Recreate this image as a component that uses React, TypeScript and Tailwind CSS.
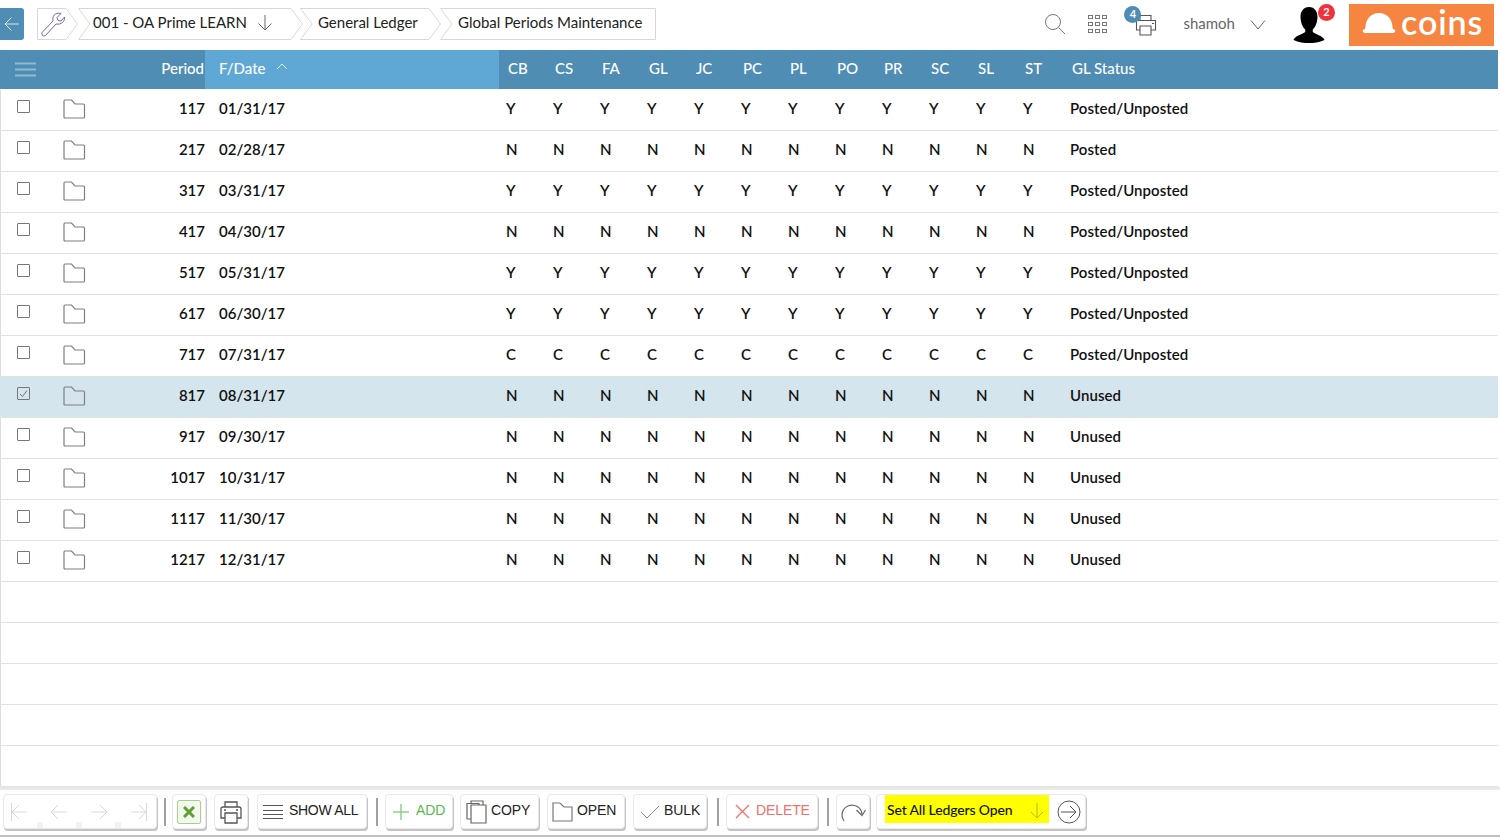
import React from "react";

const font = { fontFamily: "Lato, 'Open Sans', sans-serif" };

const data: [string, string, string, string][] = [
  ["117", "01/31/17", "Y", "Posted/Unposted"],
  ["217", "02/28/17", "N", "Posted"],
  ["317", "03/31/17", "Y", "Posted/Unposted"],
  ["417", "04/30/17", "N", "Posted/Unposted"],
  ["517", "05/31/17", "Y", "Posted/Unposted"],
  ["617", "06/30/17", "Y", "Posted/Unposted"],
  ["717", "07/31/17", "C", "Posted/Unposted"],
  ["817", "08/31/17", "N", "Unused"],
  ["917", "09/30/17", "N", "Unused"],
  ["1017", "10/31/17", "N", "Unused"],
  ["1117", "11/30/17", "N", "Unused"],
  ["1217", "12/31/17", "N", "Unused"],
];
const cols = ["CB", "CS", "FA", "GL", "JC", "PC", "PL", "PO", "PR", "SC", "SL", "ST"];
const grid = "grid grid-cols-[205px_294px_repeat(12,47px)_1fr] items-center";

function Crumb({ w, first, last, children }: { w: number; first?: boolean; last?: boolean; children: React.ReactNode }) {
  const h = 32;
  const tip = 12;
  const d = last
    ? `M0.5 0.5 L${tip} ${h / 2} L0.5 ${h - 0.5} L${w - 0.5} ${h - 0.5} L${w - 0.5} 0.5 Z`
    : first
    ? `M0.5 0.5 L${w - tip} 0.5 L${w - 0.5} ${h / 2} L${w - tip} ${h - 0.5} L0.5 ${h - 0.5} Z`
    : `M0.5 0.5 L${tip} ${h / 2} L0.5 ${h - 0.5} L${w - tip} ${h - 0.5} L${w - 0.5} ${h / 2} L${w - tip} 0.5 Z`;
  return (
    <div className="relative h-[32px] flex items-center shrink-0 text-[15px] text-[#222]" style={{ width: w }}>
      <svg className="absolute left-0 top-0" width={w} height={h} fill="none">
        <path d={d} stroke="#d8d8d8" />
      </svg>
      <div className="relative flex items-center -mt-[2px]">{children}</div>
    </div>
  );
}

function Folder() {
  return (
    <svg className="block" width="23" height="20" viewBox="0 0 23 20" fill="none" stroke="#7f7f7f" strokeWidth="1.2">
      <path d="M1 2.2 Q1 1 2 1 L8.5 1 L12 5 L20.5 5 Q21.5 5 21.5 6 L21.5 18 Q21.5 19 20.5 19 L2 19 Q1 19 1 18 Z" />
    </svg>
  );
}

function Btn({ className, children }: { className: string; children: React.ReactNode }) {
  return (
    <div className={`h-[35px] shrink-0 flex items-center bg-white rounded-[4px] border border-[#e8e8e8] shadow-[1px_2px_0_#c4c4c4] ${className}`}>
      {children}
    </div>
  );
}

function Sep({ className }: { className: string }) {
  return <div className={`w-[2px] h-[28px] bg-[#a0a0a0] shrink-0 ${className}`} />;
}

export default function App() {
  return (
    <div className="w-[1500px] h-[838px] overflow-hidden bg-white flex flex-col" style={font}>
      {/* top bar */}
      <div className="h-[50px] shrink-0 flex items-center relative">
        <div className="w-[24px] h-[32px] bg-[#4f8db5] rounded-r-[3px] flex items-center justify-center -mt-[3px]">
          <svg width="16" height="16" viewBox="0 0 16 16" fill="none" stroke="#dbe9f2" strokeWidth="1">
            <path d="M15 8 L1 8 M7.5 1.5 L1 8 L7.5 14.5" />
          </svg>
        </div>
        <div className="flex items-center ml-[13px] -mt-[3px]">
          <Crumb w={41} first>
            <svg className="ml-[3px] mt-[2px]" width="26" height="26" viewBox="0 0 26 26" fill="none" stroke="#7d64b5" strokeWidth="1">
              <path d="M2 21.5 L13 10 Q12 5 15.500 3 Q18 1.500 21 2.500 L17 6.500 L18 9.500 L21 10 L24.500 6 Q25 9.500 22.500 11.500 Q19.500 14 16 13 L5.500 24.500 Q3.500 25.500 2.500 24.500 Q1.500 23 2 21.500 Z" />
            </svg>
          </Crumb>
          <Crumb w={225}>
            <span className="ml-[15px]">001 - OA Prime LEARN</span>
            <svg className="ml-[10px] mt-[1px]" width="16" height="18" viewBox="0 0 16 18" fill="none" stroke="#666" strokeWidth="1">
              <path d="M8 1 L8 16 M1.500 9.500 L8 16 L14.500 9.500" />
            </svg>
          </Crumb>
          <div className="-ml-[3px]">
            <Crumb w={141}>
              <span className="ml-[18px]">General Ledger</span>
            </Crumb>
          </div>
          <div className="-ml-[1px]">
            <Crumb w={216} last>
              <span className="ml-[18px]">Global Periods Maintenance</span>
            </Crumb>
          </div>
        </div>
        <div className="ml-auto flex items-center h-full relative">
          <svg className="-mt-[3px]" width="22" height="22" viewBox="0 0 22 22" fill="none" stroke="#777" strokeWidth="1">
            <circle cx="9" cy="9" r="7.500" />
            <path d="M14.500 14.500 L21 21" />
          </svg>
          <svg className="ml-[22px] -mt-[2px]" width="19" height="19" viewBox="0 0 19 19" fill="#777">
            {[0, 7, 14].flatMap((y) =>
              [0, 7, 14].map((x) => (
                <path key={`${x}-${y}`} fillRule="evenodd" d={`M${x} ${y}h5v4h-5z M${x + 1} ${y + 1}v2h3v-2z`} />
              ))
            )}
          </svg>
          <div className="relative ml-[28px] -mt-[1px]">
            <svg className="block" width="22" height="22" viewBox="0 0 22 22" fill="none" stroke="#555" strokeWidth="1.100">
              <path d="M5 6 L5 1.500 L16 1.500 L16 6 M5 16 L1.500 16 L1.500 6.500 L20.500 6.500 L20.500 16 L16 16 M5 12 L16 12 L16 21 L5 21 Z" />
              <path d="M17 9.500 L19 9.500" />
            </svg>
            <div className="absolute -left-[11px] -top-[8px] w-[17px] h-[17px] rounded-full bg-[#4f8db5] text-white text-[11px] font-bold flex items-center justify-center">
              4
            </div>
          </div>
          <span className="ml-[26px] text-[15px] text-[#666] -mt-[3px]">shamoh</span>
          <svg className="ml-[15px] -mt-[1px]" width="16" height="10" viewBox="0 0 16 10" fill="none" stroke="#666" strokeWidth="1">
            <path d="M1 0.500 L8 9 L15 0.500" />
          </svg>
          <div className="relative ml-[27px]">
            <svg className="block" width="32" height="36" viewBox="0 0 34 36" fill="#000" preserveAspectRatio="none">
              <path d="M17 0 C23 0 26 4.500 26 10 C26 15 24 20 21 22.500 L21 25 C24 27.500 30 28 33 32 L33.500 33 C28 35.500 22 36 17 36 C12 36 6 35.500 0.500 33 L1 32 C4 28 10 27.500 13 25 L13 22.500 C10 20 8 15 8 10 C8 4.500 11 0 17 0 Z" />
            </svg>
            <div className="absolute left-[25px] -top-[3px] w-[17px] h-[17px] rounded-full bg-[#f0323c] text-white text-[11px] font-bold flex items-center justify-center">
              2
            </div>
          </div>
          <div className="ml-[24px] mr-[6px] w-[145px] h-[42px] bg-[#f58540] flex items-center -mt-[1px]">
            <svg className="ml-[13px] -mt-[3px]" width="34" height="20" viewBox="0 0 36 22" fill="#fff">
              <path d="M3 17 C3 7 9 0 18 0 C27 0 33 7 33 17 L36 19 Q36 22 34 22 L2 22 Q0 22 0 19 Z" />
            </svg>
            <span className="ml-[5px] text-white text-[34px] font-semibold leading-none tracking-[0.9px] -mt-[6px]">coins</span>
          </div>
        </div>
      </div>

      {/* header */}
      <div className={`${grid} h-[39px] shrink-0 bg-[#4f8db5] text-white text-[15px] font-medium w-[1498px]`}>
        <div className="flex items-center justify-between h-full">
          <svg className="ml-[15px]" width="21" height="15" viewBox="0 0 21 15" stroke="#8fb9d4" strokeWidth="2">
            <path d="M0 1.500 H21 M0 7.500 H21 M0 13.500 H21" />
          </svg>
          <span className="mr-[1px] pb-[3px]">Period</span>
        </div>
        <div className="h-full bg-[#5fa8d6] flex items-center pl-[14px] pb-[3px]">
          <span>F/Date</span>
          <svg className="ml-[10px] -mt-[3px]" width="12" height="7" viewBox="0 0 12 7" fill="none" stroke="#dcecf6" strokeWidth="1">
            <path d="M1 6 L6 1 L11 6" />
          </svg>
        </div>
        {cols.map((c) => (
          <div key={c} className="pl-[9px] pb-[3px]">{c}</div>
        ))}
        <div className="pl-[9px] pb-[3px]">GL Status</div>
      </div>

      {/* rows */}
      <div className="flex-1 mt-[1px] border-l border-[#dcdcdc] w-[1498px]">
        {data.map(([p, d, f, s]) => {
          const sel = p === "817";
          return (
            <div
              key={p}
              className={`${grid} h-[41px] pb-[4px] border-b border-[#e2e2e2] text-[15px] font-semibold text-[#111] -ml-[1px] ${sel ? "bg-[#d5e5ee]" : ""}`}
            >
              <div className="flex items-center">
                <div className="ml-[17px] -mt-[3px] w-[13px] h-[13px] border border-[#777] rounded-[1px] flex items-center justify-center">
                  {sel && (
                    <svg width="9" height="9" viewBox="0 0 9 9" fill="none" stroke="#777" strokeWidth="1">
                      <path d="M1 5 L3.500 7.500 L8 1.500" />
                    </svg>
                  )}
                </div>
                <div className="ml-[33px] mt-[1px]">
                  <Folder />
                </div>
                <span className="ml-auto">{p}</span>
              </div>
              <div className="pl-[14px]">{d}</div>
              {cols.map((c) => (
                <div key={c} className="pl-[7px]">{f}</div>
              ))}
              <div className="pl-[7px] tracking-[0.07px]">{s}</div>
            </div>
          );
        })}
        {[0, 1, 2, 3, 4].map((i) => (
          <div key={i} className="h-[41px] border-b border-[#e2e2e2] -ml-[1px]" />
        ))}
      </div>

      {/* toolbar */}
      <div className="h-[50px] mb-[1px] shrink-0 border-t-2 border-[#e8e8e8] border-b-2 border-b-[#c0c0c0] text-[14px] text-[#222]" style={{ fontFamily: "'Liberation Sans', sans-serif" }}>
        <div className="h-px bg-[#ececec]" />
        <div className="flex items-center mt-[4px] tracking-[-0.1px]">
          <div className="relative ml-[3px] w-[154px] h-[35px] shrink-0 flex items-center gap-[22px] pl-[6px] bg-white rounded-[4px] border border-[#e8e8e8] shadow-[1px_2px_0_#c4c4c4]">
            <svg width="18" height="20" viewBox="0 0 18 20" fill="none" stroke="#d8d8d8"><path d="M1.500 1 V19 M17 10 H2 M9 3 L2 10 L9 17" /></svg>
            <svg width="18" height="20" viewBox="0 0 18 20" fill="none" stroke="#d8d8d8"><path d="M17 10 H1 M8 3 L1 10 L8 17" /></svg>
            <svg width="18" height="20" viewBox="0 0 18 20" fill="none" stroke="#d8d8d8"><path d="M1 10 H17 M10 3 L17 10 L10 17" /></svg>
            <svg width="18" height="20" viewBox="0 0 18 20" fill="none" stroke="#d8d8d8"><path d="M16.500 1 V19 M1 10 H16 M9 3 L16 10 L9 17" /></svg>
            <div className="absolute left-[33px] bottom-0 w-[6px] h-[6px] bg-[#f2f2f2]" />
            <div className="absolute left-[72px] bottom-0 w-[6px] h-[6px] bg-[#f2f2f2]" />
            <div className="absolute left-[111px] bottom-0 w-[6px] h-[6px] bg-[#f2f2f2]" />
          </div>
          <Sep className="ml-[7px]" />
          <Btn className="ml-[6px] w-[34px] justify-center">
            <div className="w-[24px] h-[24px] bg-[#f3f8ec] border border-[#a9cf8f] rounded-[2px] flex items-center justify-center">
              <svg width="12" height="12" viewBox="0 0 12 12" stroke="#5fa034" strokeWidth="3"><path d="M1 1 L11 11 M11 1 L1 11" /></svg>
            </div>
          </Btn>
          <Btn className="ml-[8px] w-[34px] justify-center">
            <svg width="24" height="24" viewBox="0 0 24 24" fill="none" stroke="#555" strokeWidth="1.300">
              <path d="M6 7 V2 H18 V7 M6 18 H2 V9 Q2 7 4 7 H20 Q22 7 22 9 V18 H18 M6 13 H18 V23 H6 Z M5 10 H7 M17 10 H19" />
            </svg>
          </Btn>
          <Btn className="ml-[9px] w-[110px]">
            <svg className="ml-[5px]" width="20" height="18" viewBox="0 0 20 18" fill="none" stroke="#555"><path d="M0 2.500 H20 M0 7.500 H20 M0 11.500 H20 M0 15.500 H20" /></svg>
            <span className="ml-[6px] -mt-[2px] tracking-[-0.3px]">SHOW ALL</span>
          </Btn>
          <Sep className="ml-[9px]" />
          <Btn className="ml-[7px] w-[68px]">
            <svg className="ml-[6px]" width="18" height="18" viewBox="0 0 18 18" stroke="#8fd08f" strokeWidth="1.500"><path d="M9 1 V17 M1 9 H17" /></svg>
            <span className="ml-[6px] -mt-[2px] text-[#59b84f]">ADD</span>
          </Btn>
          <Btn className="ml-[7px] w-[79px]">
            <svg className="ml-[5px]" width="21" height="24" viewBox="0 0 21 24" fill="none" stroke="#666" strokeWidth="1.200"><path d="M5 3.500 V1 H17 L17 5 M1 3.500 H13 L13 5 H20 V23 H5 V19 H1 Z M5 19 V5 H13" /></svg>
            <span className="ml-[4px] -mt-[2px]">COPY</span>
          </Btn>
          <Btn className="ml-[8px] w-[78px]">
            <svg className="ml-[4px]" width="21" height="20" viewBox="0 0 21 20" fill="none" stroke="#777" strokeWidth="1.200"><path d="M1 1 H8 L12 5 H20 V19 H1 Z" /></svg>
            <span className="ml-[4px] -mt-[2px]">OPEN</span>
          </Btn>
          <Btn className="ml-[8px] w-[74px]">
            <svg className="ml-[6px]" width="20" height="14" viewBox="0 0 20 14" fill="none" stroke="#888"><path d="M1 7 L7 13 L19 1" /></svg>
            <span className="ml-[4px] -mt-[2px]">BULK</span>
          </Btn>
          <Sep className="ml-[10px]" />
          <Btn className="ml-[7px] w-[92px]">
            <svg className="ml-[8px]" width="15" height="15" viewBox="0 0 15 15" stroke="#f0706a" strokeWidth="1.300"><path d="M1 1 L14 14 M14 1 L1 14" /></svg>
            <span className="ml-[6px] -mt-[2px] text-[#f0706a]">DELETE</span>
          </Btn>
          <Sep className="ml-[9px]" />
          <Btn className="ml-[7px] w-[34px] justify-center">
            <svg width="26" height="24" viewBox="0 0 26 24" fill="none" stroke="#666" strokeWidth="1.200"><path d="M4 21 A 10 10 0 1 1 22 14 M16.500 10 L22 15.500 L25.500 10" /></svg>
          </Btn>
          <div className="ml-[6px] w-[210px] h-[35px] shrink-0 flex items-center bg-white rounded-[4px] border border-[#e8e8e8] shadow-[1px_2px_0_#c4c4c4]" style={font}>
            <div className="ml-[8px] w-[164px] h-[28px] -mt-[5px] bg-[#ffff00] flex items-center justify-between pl-[2px] pr-[4px]">
              <span className="text-[14px] font-medium text-[#111] tracking-[-0.15px]">Set All Ledgers Open</span>
              <svg className="mt-[3px]" width="16" height="18" viewBox="0 0 16 18" fill="none" stroke="#b5b52c"><path d="M8 1 V16 M2 10 L8 16 L14 10" /></svg>
            </div>
            <svg className="ml-[8px]" width="24" height="24" viewBox="0 0 24 24" fill="none" stroke="#555"><circle cx="12" cy="12" r="11" /><path d="M4 12 H19 M13 6 L19 12 L13 18" /></svg>
          </div>
        </div>
      </div>
    </div>
  );
}
